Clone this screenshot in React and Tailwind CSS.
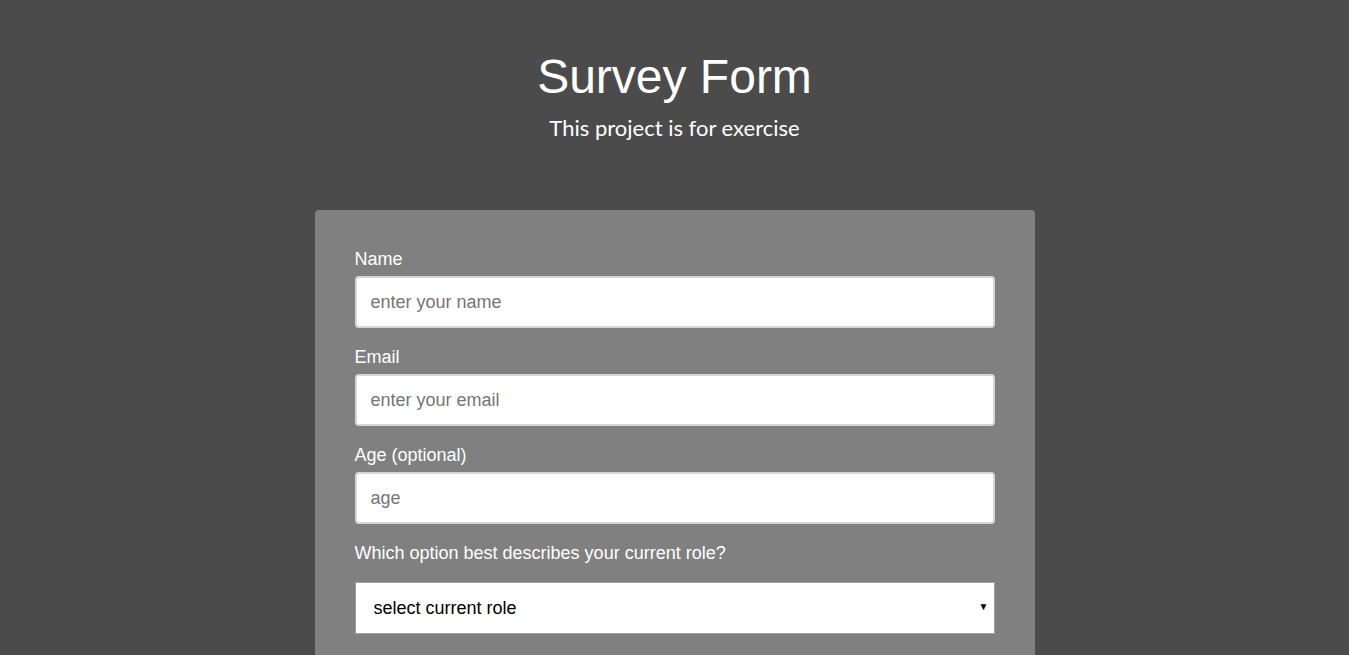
import React, { useState } from "react";

const fields = [
  { id: "name", label: "Name", type: "text", placeholder: "enter your name" },
  { id: "email", label: "Email", type: "email", placeholder: "enter your email" },
  { id: "age", label: "Age (optional)", type: "number", placeholder: "age" },
];

const App = () => {
  const [values, setValues] = useState({ name: "", email: "", age: "", role: "" });

  return (
    <div
      className="min-h-screen bg-[#4b4b4b] text-white"
      style={{ fontFamily: "Arial, 'Liberation Sans', sans-serif" }}
    >
      <header className="pt-[49px] text-center">
        <h1 className="text-[48px] leading-[56px] font-normal">Survey Form</h1>
        <p className="mt-[10px] text-[22px] leading-[26px] font-['Lato',sans-serif]">
          This project is for exercise
        </p>
      </header>

      <form
        onSubmit={(e) => e.preventDefault()}
        className="mx-auto mt-[69px] w-[720px] rounded-[4px] bg-[#808080] px-[40px] pt-[39px] pb-[40px]"
      >
        {fields.map((f) => (
          <div key={f.id} className="mb-[19px]">
            <label htmlFor={f.id} className="block text-[18px] leading-[21px]">
              {f.label}
            </label>
            <input
              id={f.id}
              type={f.type}
              placeholder={f.placeholder}
              value={values[f.id]}
              onChange={(e) => setValues({ ...values, [f.id]: e.target.value })}
              className="mt-[6px] block h-[52px] w-full rounded-[4px] border-2 border-[#d6d6d6] bg-white px-[14px] text-[18px] text-black placeholder:text-[#757575] outline-none"
            />
          </div>
        ))}

        <div>
          <label htmlFor="role" className="block text-[18px] leading-[21px]">
            Which option best describes your current role?
          </label>
          <div className="relative mt-[18px]">
            <select
              id="role"
              value={values.role}
              onChange={(e) => setValues({ ...values, role: e.target.value })}
              className="block h-[52px] w-full appearance-none border border-[#a0a0a0] bg-white pl-[18px] text-[18px] text-black outline-none"
            >
              <option value="">select current role</option>
              <option value="student">Student</option>
              <option value="full-time">Full Time Job</option>
              <option value="learner">Full Time Learner</option>
              <option value="other">Other</option>
            </select>
            <span className="pointer-events-none absolute right-[6px] top-[17px] text-[10px] text-black">
              ▼
            </span>
          </div>
        </div>
      </form>
    </div>
  );
};

export default App;
